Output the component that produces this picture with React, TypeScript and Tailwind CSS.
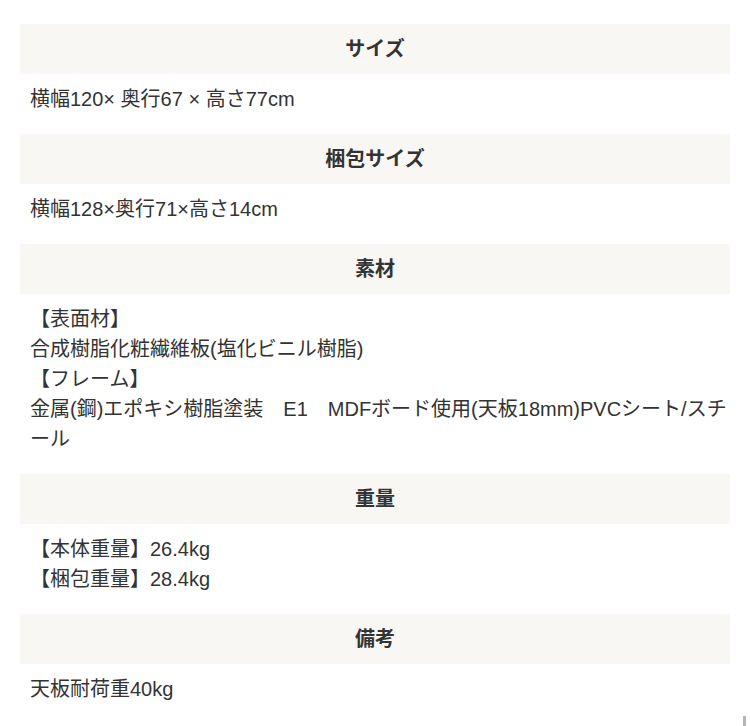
import React from "react";

const font = { fontFamily: '"Liberation Sans", Arial, "Noto Sans CJK JP", sans-serif' };

function Header({ title }: { title: string }) {
  return (
    <div className="h-[50px] bg-[#f8f7f4] flex items-center justify-center text-[20px] font-bold text-[#333]">
      {title}
    </div>
  );
}

function Body({ children }: { children: React.ReactNode }) {
  return (
    <div className="pt-[10px] pb-[20px] px-[10px] text-[20px] leading-[30px] text-[#333]">
      {children}
    </div>
  );
}

export default function App() {
  return (
    <div className="relative w-[750px] h-[726px] bg-white overflow-hidden" style={font}>
      <div className="pt-[24px] pl-[20px] pr-[20px]">
        <Header title="サイズ" />
        <Body>横幅120× 奥行67 × 高さ77cm</Body>
        <Header title="梱包サイズ" />
        <Body>横幅128×奥行71×高さ14cm</Body>
        <Header title="素材" />
        <Body>
          <div>【表面材】</div>
          <div>合成樹脂化粧繊維板(塩化ビニル樹脂)</div>
          <div>【フレーム】</div>
          <div className="whitespace-nowrap">金属(鋼)エポキシ樹脂塗装　E1　MDFボード使用(天板18mm)PVCシート/スチ</div>
          <div>ール</div>
        </Body>
        <Header title="重量" />
        <Body>
          <div>【本体重量】26.4kg</div>
          <div>【梱包重量】28.4kg</div>
        </Body>
        <Header title="備考" />
        <Body>天板耐荷重40kg</Body>
      </div>
      <div className="absolute right-[4px] bottom-0 w-[3px] h-[10px] bg-[#b5b5b5]" />
    </div>
  );
}
